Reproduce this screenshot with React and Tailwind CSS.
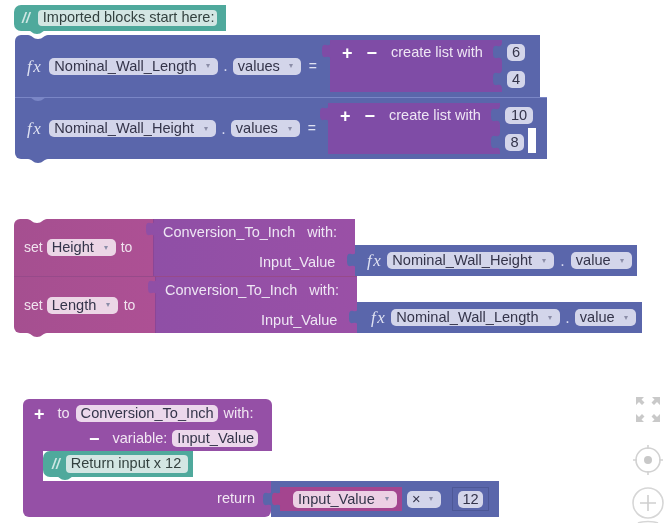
const FONT = "font-['Liberation_Sans',Arial,sans-serif]";

function Tab({ color, className }) {
  return (
    <svg className={`absolute ${className}`} width="9" height="20" viewBox="0 0 9 20">
      <path d="M9 0 C9 4 7 5 4 4 C0 3 0 7 0 10 C0 13 0 17 4 16 C7 15 9 16 9 20 Z" fill={color} />
    </svg>
  );
}

function Bump({ color, className }) {
  return (
    <svg className={`absolute ${className}`} width="20" height="4" viewBox="0 0 20 4">
      <path d="M0 0 C4 0 5 4 10 4 C15 4 16 0 20 0 Z" fill={color} />
    </svg>
  );
}

function Fx({ className = "" }) {
  return <span className={`font-['Liberation_Serif',serif] italic text-[17px] tracking-[1.5px] leading-none text-[#dfe2f2] ${className}`}>fx</span>;
}

function Field({ w, bg = "bg-[#d3d5ea]", caret = true, center = false, className = "", children }) {
  return (
    <span style={{ width: w }} className={`inline-flex h-[17px] shrink-0 items-center ${center ? "justify-center" : "justify-between pl-[5px] pr-2"} rounded-[5px] ${bg} text-[14.6px] leading-none text-[#34344a] ${className}`}>
      <span>{children}</span>
      {caret && <span className="text-[8px] leading-none text-[#8b8da8]">▾</span>}
    </span>
  );
}

function PlusMinus({ className = "" }) {
  return (
    <span className={`flex items-center gap-[14px] text-[18px] font-bold leading-none text-white ${className}`}>
      <span>+</span><span>−</span>
    </span>
  );
}

function ListRow({ height, width, name, values, purpleL, nameW, valW, textMl, a, b, cursor, divider, rounded }) {
  return (
    <div className={`relative flex items-center bg-[#5a66ab] ${rounded} ${divider ? "border-t border-[#7a86c6]" : ""}`} style={{ height, width }}>
      <Fx className="ml-3" />
      <Field w={nameW} className="ml-[7px]">{name}</Field>
      <span className="mx-[5px] text-[#d7daf0]">.</span>
      <Field w={valW}>{values}</Field>
      <span className="ml-[8px] text-[14px] text-[#dfe2f2]">=</span>
      <div className="absolute top-[5px] bottom-[5px] flex flex-col bg-[#7f4ca6] pt-[1px]" style={{ left: purpleL, width: 172 }}>
        <Tab color="#7f4ca6" className="-left-[8px] top-[1px]" />
        <Tab color="#5a66ab" className="right-0 top-[2px]" />
        <Tab color="#5a66ab" className="right-0 top-[29px]" />
        <div className="flex h-6 items-center">
          <PlusMinus className="ml-3" />
          <span className="text-[14.5px] text-[#eee6f4]" style={{ marginLeft: textMl }}>create list with</span>
        </div>
      </div>
      <div className="absolute top-0 bottom-0 flex flex-col gap-[10px] pt-[9px]" style={{ left: purpleL + 177 }}>
        <Field w={a.w} caret={false} center>{a.t}</Field>
        <Field w={b.w} caret={false} center>{b.t}</Field>
      </div>
      {cursor && <span className="absolute left-[513px] top-[30px] h-[25px] w-2 bg-white" />}
    </div>
  );
}

function SetRow({ field, fieldW, toMl, name, pinkW, purpleW, textL, inputL, blueL, blueW, fxMl, nameW, nameML, dotM, valW, rounded, divider }) {
  const line = divider ? "border-t border-t-[#974a8a]" : "";
  return (
    <div className="relative flex h-[57px]">
      <div className={`flex items-center bg-gradient-to-r from-[#a54f90] to-[#ad5094] pl-[10px] text-[14px] text-[#f1e4ef] ${rounded} ${line}`} style={{ width: pinkW }}>
        <span>set</span>
        <Field w={fieldW} bg="bg-[#ecd6e6]" className="ml-1">{field}</Field>
        <span style={{ marginLeft: toMl }}>to</span>
      </div>
      <div className={`relative border-l border-[#8a4697] bg-gradient-to-r from-[#8f4fa6] to-[#9a50a6] text-[14.5px] text-[#eee6f4] ${line}`} style={{ width: purpleW }}>
        <Tab color="#8f4fa6" className="-left-[8px] top-0" />
        <div className="absolute top-[3px] flex w-[174px] justify-between" style={{ left: textL }}><span>Conversion_To_Inch</span><span>with:</span></div>
        <div className="absolute top-[33px]" style={{ left: inputL }}>Input_Value</div>
      </div>
      <div className="absolute bottom-0 flex h-[31px] items-center bg-[#5a66ab]" style={{ left: blueL, width: blueW }}>
        <Tab color="#5a66ab" className="-left-[8px] top-[5px]" />
        <Fx className={fxMl} />
        <Field w={nameW} className={nameML}>{name}</Field>
        <span className={`${dotM} text-[#d7daf0]`}>.</span>
        <Field w={valW}>value</Field>
      </div>
    </div>
  );
}

function Controls() {
  return (
    <svg className="absolute left-[630px] top-[390px]" width="34" height="133" viewBox="0 0 34 133" fill="none">
      <g fill="#c9c9c9">
        <path d="M6 7 H14 L11.5 9.5 L14.5 12.5 L12 15 L9 12 L6 15 Z" />
        <path d="M30 7 H22 L24.5 9.5 L21.5 12.5 L24 15 L27 12 L30 15 Z" />
        <path d="M6 32 H14 L11.5 29.5 L14.5 26.5 L12 24 L9 27 L6 24 Z" />
        <path d="M30 32 H22 L24.5 29.5 L21.5 26.5 L24 24 L27 27 L30 24 Z" />
      </g>
      <circle cx="18" cy="70" r="12" stroke="#d2d2d2" strokeWidth="1.6" fill="#fff" />
      <circle cx="18" cy="70" r="4" fill="#c8c8c8" />
      <path d="M18 55 V59 M18 81 V85 M3 70 H7 M29 70 H33" stroke="#d2d2d2" strokeWidth="1.6" />
      <circle cx="18" cy="113" r="15" stroke="#d6d6d6" strokeWidth="1.6" fill="#fff" />
      <path d="M18 105 V121 M10 113 H26" stroke="#cfcfcf" strokeWidth="1.6" />
      <path d="M8 133 C12 131 24 131 28 133" stroke="#d6d6d6" strokeWidth="1.6" />
    </svg>
  );
}

export default function App() {
  return (
    <div className={`relative h-[523px] w-[664px] overflow-hidden bg-white blur-[0.5px] ${FONT}`}>
      {/* first comment */}
      <div className="absolute left-[14px] top-[5px] flex h-[26px] w-[212px] items-center rounded-l-[7px] bg-[#4fa99c] pl-[8px]">
        <span className="text-[14px] font-bold italic text-[#cfe8e4]">//</span>
        <span className="ml-[8px] flex h-[16px] w-[179px] items-center rounded-[4px] bg-[#d3e6e3] pl-[5px] text-[14.5px] text-[#33413f]">Imported blocks start here:</span>
        <Bump color="#4fa99c" className="left-[13px] -bottom-[3px]" />
      </div>

      {/* list blocks */}
      <div className="absolute left-[15px] top-[35px]">
        <ListRow height={62} width={525} rounded="rounded-tl-[6px]" name="Nominal_Wall_Length" values="values" purpleL={315} nameW={169} valW={68} textMl={14} a={{ t: "6", w: 18 }} b={{ t: "4", w: 18 }} />
        <ListRow height={62} width={532} rounded="rounded-bl-[6px]" divider name="Nominal_Wall_Height" values="values" purpleL={313} nameW={167} valW={69} textMl={14} a={{ t: "10", w: 28 }} b={{ t: "8", w: 19 }} cursor />
        <Bump color="#5a66ab" className="left-[13px] -bottom-[4px]" />
        <Bump color="#ffffff" className="left-[13px] top-0" />
        <Bump color="#7a86c6" className="left-[13px] top-[62px]" />
      </div>

      {/* set blocks */}
      <div className="absolute left-[14px] top-[219px] w-[628px]">
        <SetRow field="Height" fieldW={69} toMl={5} rounded="rounded-tl-[6px]" name="Nominal_Wall_Height" pinkW={139} purpleW={202} textL={9} inputL={105} blueL={341} blueW={282} fxMl="ml-[12px]" nameW={167} nameML="ml-[5px]" dotM="mx-[6px]" valW={61} />
        <SetRow field="Length" fieldW={71} toMl={6} divider rounded="rounded-bl-[6px]" name="Nominal_Wall_Length" pinkW={141} purpleW={202} textL={9} inputL={105} blueL={343} blueW={285} fxMl="ml-[14px]" nameW={169} nameML="ml-[5px]" dotM="mx-[5px]" valW={61} />
        <Bump color="#a54f90" className="left-[13px] -bottom-[4px]" />
        <Bump color="#ffffff" className="left-[13px] top-0" />
      </div>

      {/* procedure block */}
      <div className="absolute left-[23px] top-[399px] flex w-[476px] flex-col text-[14.5px] text-[#f2e7f3]">
        <div className="flex h-[52px] w-[249px] flex-col rounded-t-[6px] bg-[#9550a6] pt-[2px]">
          <div className="flex h-[26px] items-center pl-[11px]">
            <span className="text-[18px] font-bold leading-none text-white">+</span>
            <span className="ml-[13px]">to</span>
            <Field w={142} bg="bg-[#ecd8ec]" caret={false} className="ml-[6px]">Conversion_To_Inch</Field>
            <span className="ml-[6px]">with:</span>
          </div>
          <div className="flex h-[26px] items-center pl-[66px]">
            <span className="text-[18px] font-bold leading-none text-white">−</span>
            <span className="ml-[13px]">variable:</span>
            <Field w={86} bg="bg-[#ecd8ec]" caret={false} className="ml-[5px]">Input_Value</Field>
          </div>
        </div>
        <div className="flex h-[30px] w-[170px]">
          <div className="w-5 bg-[#9550a6]" />
          <div className="relative flex h-[26px] w-[150px] items-center rounded-l-[7px] bg-[#4fa99c] pl-[9px]">
            <span className="text-[14px] font-bold italic text-[#cfe8e4]">//</span>
            <span className="ml-[6px] flex h-[18px] w-[122px] items-center rounded-[4px] bg-[#d3e6e3] pl-[5px] text-[#33413f]">Return input x 12</span>
            <Bump color="#4fa99c" className="left-[12px] -bottom-[3px]" />
          </div>
        </div>
        <div className="relative flex h-[36px]">
          <div className="flex w-[248px] items-center justify-end rounded-b-[6px] bg-[#9550a6] pr-[16px]">return</div>
          <div className="relative flex flex-1 items-center bg-[#5a66ab]">
            <Tab color="#5a66ab" className="-left-[8px] top-[8px]" />
            <div className="relative ml-[9px] flex h-6 w-[122px] items-center justify-end bg-[#a4458f] pr-[5px]">
              <Tab color="#a4458f" className="-left-[8px] top-[2px]" />
              <Field w={104} bg="bg-[#ecd0e4]">Input_Value</Field>
            </div>
            <Field w={34} className="ml-[5px]">×</Field>
            <div className="relative ml-[11px] flex h-6 w-[37px] items-center justify-center border border-[#4d5897]">
              <Field w={25} caret={false} center>12</Field>
            </div>
          </div>
        </div>
      </div>

      <Controls />
    </div>
  );
}
